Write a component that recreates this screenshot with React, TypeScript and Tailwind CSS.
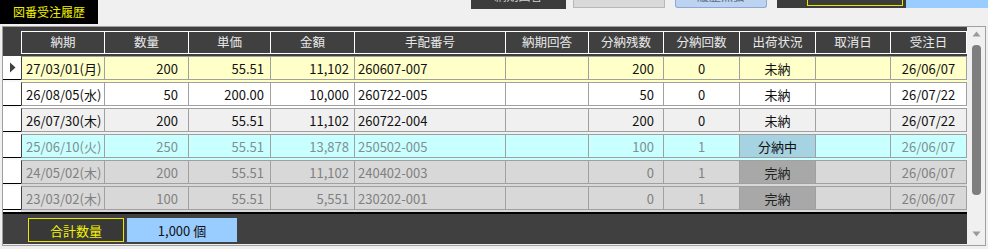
import React from "react";

type Row = {
  d: string; q: string; p: string; a: string; no: string; ans: string;
  rem: string; cnt: string; st: string; cancel: string; od: string;
  bg: string; fg: string; stBg: string; stFg: string;
};

const rows: Row[] = [
  { d: "27/03/01(月)", q: "200", p: "55.51", a: "11,102", no: "260607-007", ans: "", rem: "200", cnt: "0", st: "未納", cancel: "", od: "26/06/07", bg: "bg-[#ffffc8]", fg: "text-[#111111]", stBg: "", stFg: "" },
  { d: "26/08/05(水)", q: "50", p: "200.00", a: "10,000", no: "260722-005", ans: "", rem: "50", cnt: "0", st: "未納", cancel: "", od: "26/07/22", bg: "bg-white", fg: "text-[#111111]", stBg: "", stFg: "" },
  { d: "26/07/30(木)", q: "200", p: "55.51", a: "11,102", no: "260722-004", ans: "", rem: "200", cnt: "0", st: "未納", cancel: "", od: "26/07/22", bg: "bg-[#f0f0f0]", fg: "text-[#111111]", stBg: "", stFg: "" },
  { d: "25/06/10(火)", q: "250", p: "55.51", a: "13,878", no: "250502-005", ans: "", rem: "100", cnt: "1", st: "分納中", cancel: "", od: "26/06/07", bg: "bg-[#c8ffff]", fg: "text-[#7f8f94]", stBg: "bg-[#a6d3e2]", stFg: "text-[#111111]" },
  { d: "24/05/02(木)", q: "200", p: "55.51", a: "11,102", no: "240402-003", ans: "", rem: "0", cnt: "1", st: "完納", cancel: "", od: "26/06/07", bg: "bg-[#d8d8d8]", fg: "text-[#808080]", stBg: "bg-[#a8a8a8]", stFg: "text-[#222222]" },
  { d: "23/03/02(木)", q: "100", p: "55.51", a: "5,551", no: "230202-001", ans: "", rem: "0", cnt: "1", st: "完納", cancel: "", od: "26/06/07", bg: "bg-[#d8d8d8]", fg: "text-[#808080]", stBg: "bg-[#a8a8a8]", stFg: "text-[#222222]" },
];

const headers = [
  { t: "納期", w: "w-[83px]" },
  { t: "数量", w: "w-[84px]" },
  { t: "単価", w: "w-[82px]" },
  { t: "金額", w: "w-[84px]" },
  { t: "手配番号", w: "w-[151px]" },
  { t: "納期回答", w: "w-[83px]" },
  { t: "分納残数", w: "w-[75px]" },
  { t: "分納回数", w: "w-[76px]" },
  { t: "出荷状況", w: "w-[76px]" },
  { t: "取消日", w: "w-[75px]" },
  { t: "受注日", w: "w-[77px] border-r" },
];

function Cell({ w, align, children, extra = "" }: { w: string; align: string; children?: React.ReactNode; extra?: string }) {
  return (
    <div className={`${w} h-[24px] shrink-0 border-l border-y border-[#a0a0a0] flex items-center whitespace-nowrap overflow-hidden ${align} ${extra}`}>
      {children}
    </div>
  );
}

export default function App() {
  return (
    <div className="w-[988px] h-[249px] bg-[#f0f0f0] overflow-hidden text-[13px] leading-none font-['Noto_Sans_CJK_JP','Noto_Sans',sans-serif]">
      {/* top bar */}
      <div className="flex items-start h-[26px]">
        <div className="w-[98px] h-[24px] bg-black text-[#f2f200] flex items-center justify-center text-[12px]">図番受注履歴</div>
        <div className="ml-[373px] w-[95px] h-[9px] bg-[#3c3c3c] overflow-hidden flex justify-center">
          <span className="text-[12px] text-[#d0d0d0] -mt-[10px]">納期回答</span>
        </div>
        <div className="ml-[7px] w-[92px] h-[8px] bg-[#d9d9d9] border-x border-b border-[#b8b8b8]" />
        <div className="ml-[10px] w-[92px] h-[8px] bg-[#bcd3f2] border-x border-b border-[#8ea8d0] rounded-b-[3px] overflow-hidden flex justify-center">
          <span className="text-[12px] text-[#5a6a80] -mt-[10px]">履歴照会</span>
        </div>
        <div className="ml-[10px] w-[129px] h-[8px] bg-[#3c3c3c] flex">
          <div className="ml-[30px] w-[96px] h-[6px] border-x border-b border-[#e6e600]" />
        </div>
        <div className="w-[82px] h-[8px] bg-[#99ccff]" />
      </div>

      {/* grid frame */}
      <div className="ml-[2px] w-[984px] h-[220px] border border-[#a0a0a0] flex">
        <div className="w-[964px] flex flex-col">
          {/* header */}
          <div className="h-[29px] bg-[#404040] pt-[4px] flex">
            <div className="w-[18px] shrink-0" />
            {headers.map((h) => (
              <div key={h.t} className={`${h.w} h-[23px] shrink-0 border-l border-y border-white flex items-center justify-center text-[12.5px] text-[#e8e8e8]`}>
                {h.t}
              </div>
            ))}
          </div>
          {/* body */}
          <div className="flex flex-col bg-[#f8f8f8]">
            {rows.map((r, i) => (
              <div key={i} className="h-[26px] flex">
                <div className="w-[18px] h-[24px] shrink-0 bg-white border-b border-black flex items-center justify-center">
                  {i === 0 && (
                    <svg width="7" height="11" viewBox="0 0 7 11">
                      <path d="M1 0.5 L6.5 5.5 L1 10.5 Z" fill="#404040" />
                    </svg>
                  )}
                </div>
                <div className={`flex ${r.bg} ${r.fg}`}>
                  <Cell w="w-[83px] border-l-[#404040]" align="justify-start pl-[4px]">{r.d}</Cell>
                  <Cell w="w-[84px]" align="justify-end pr-[10px]">{r.q}</Cell>
                  <Cell w="w-[82px]" align="justify-end pr-[6px]">{r.p}</Cell>
                  <Cell w="w-[84px]" align="justify-end pr-[5px]">{r.a}</Cell>
                  <Cell w="w-[151px]" align="justify-start pl-[3px]">{r.no}</Cell>
                  <Cell w="w-[83px]" align="justify-start">{r.ans}</Cell>
                  <Cell w="w-[75px]" align="justify-end pr-[9px]">{r.rem}</Cell>
                  <Cell w="w-[76px]" align="justify-center">{r.cnt}</Cell>
                  <Cell w="w-[76px]" align="justify-center" extra={`${r.stBg} ${r.stFg}`}>{r.st}</Cell>
                  <Cell w="w-[75px]" align="justify-center">{r.cancel}</Cell>
                  <Cell w="w-[77px] border-r" align="justify-center">{r.od}</Cell>
                </div>
              </div>
            ))}
          </div>
          {/* footer */}
          <div className="h-[32px] bg-[#404040] border-t-2 border-black flex items-start pt-[4px] pl-[25px]">
            <div className="w-[96px] h-[24px] border border-[#e6e600] bg-[#383838] text-[#f2f200] flex items-center justify-center">合計数量</div>
            <div className="ml-[3px] w-[110px] h-[24px] bg-[#99ccff] text-[#111111] flex items-center justify-center">1,000 個</div>
          </div>
        </div>
        {/* scrollbar */}
        <div className="w-[18px] bg-[#f0f0f0] flex flex-col items-center pt-[4px]">
          <svg width="9" height="6" viewBox="0 0 9 6">
            <path d="M4.5 0.5 L8.5 5.5 L0.5 5.5 Z" fill="#9a9a9a" />
          </svg>
          <div className="mt-[8px] w-[9px] h-[150px] rounded-[4px] bg-[#7e7e7e]" />
          <div className="flex-1" />
          <svg width="9" height="6" viewBox="0 0 9 6" className="mb-[8px]">
            <path d="M0.5 0.5 L8.5 0.5 L4.5 5.5 Z" fill="#9a9a9a" />
          </svg>
        </div>
      </div>
    </div>
  );
}
